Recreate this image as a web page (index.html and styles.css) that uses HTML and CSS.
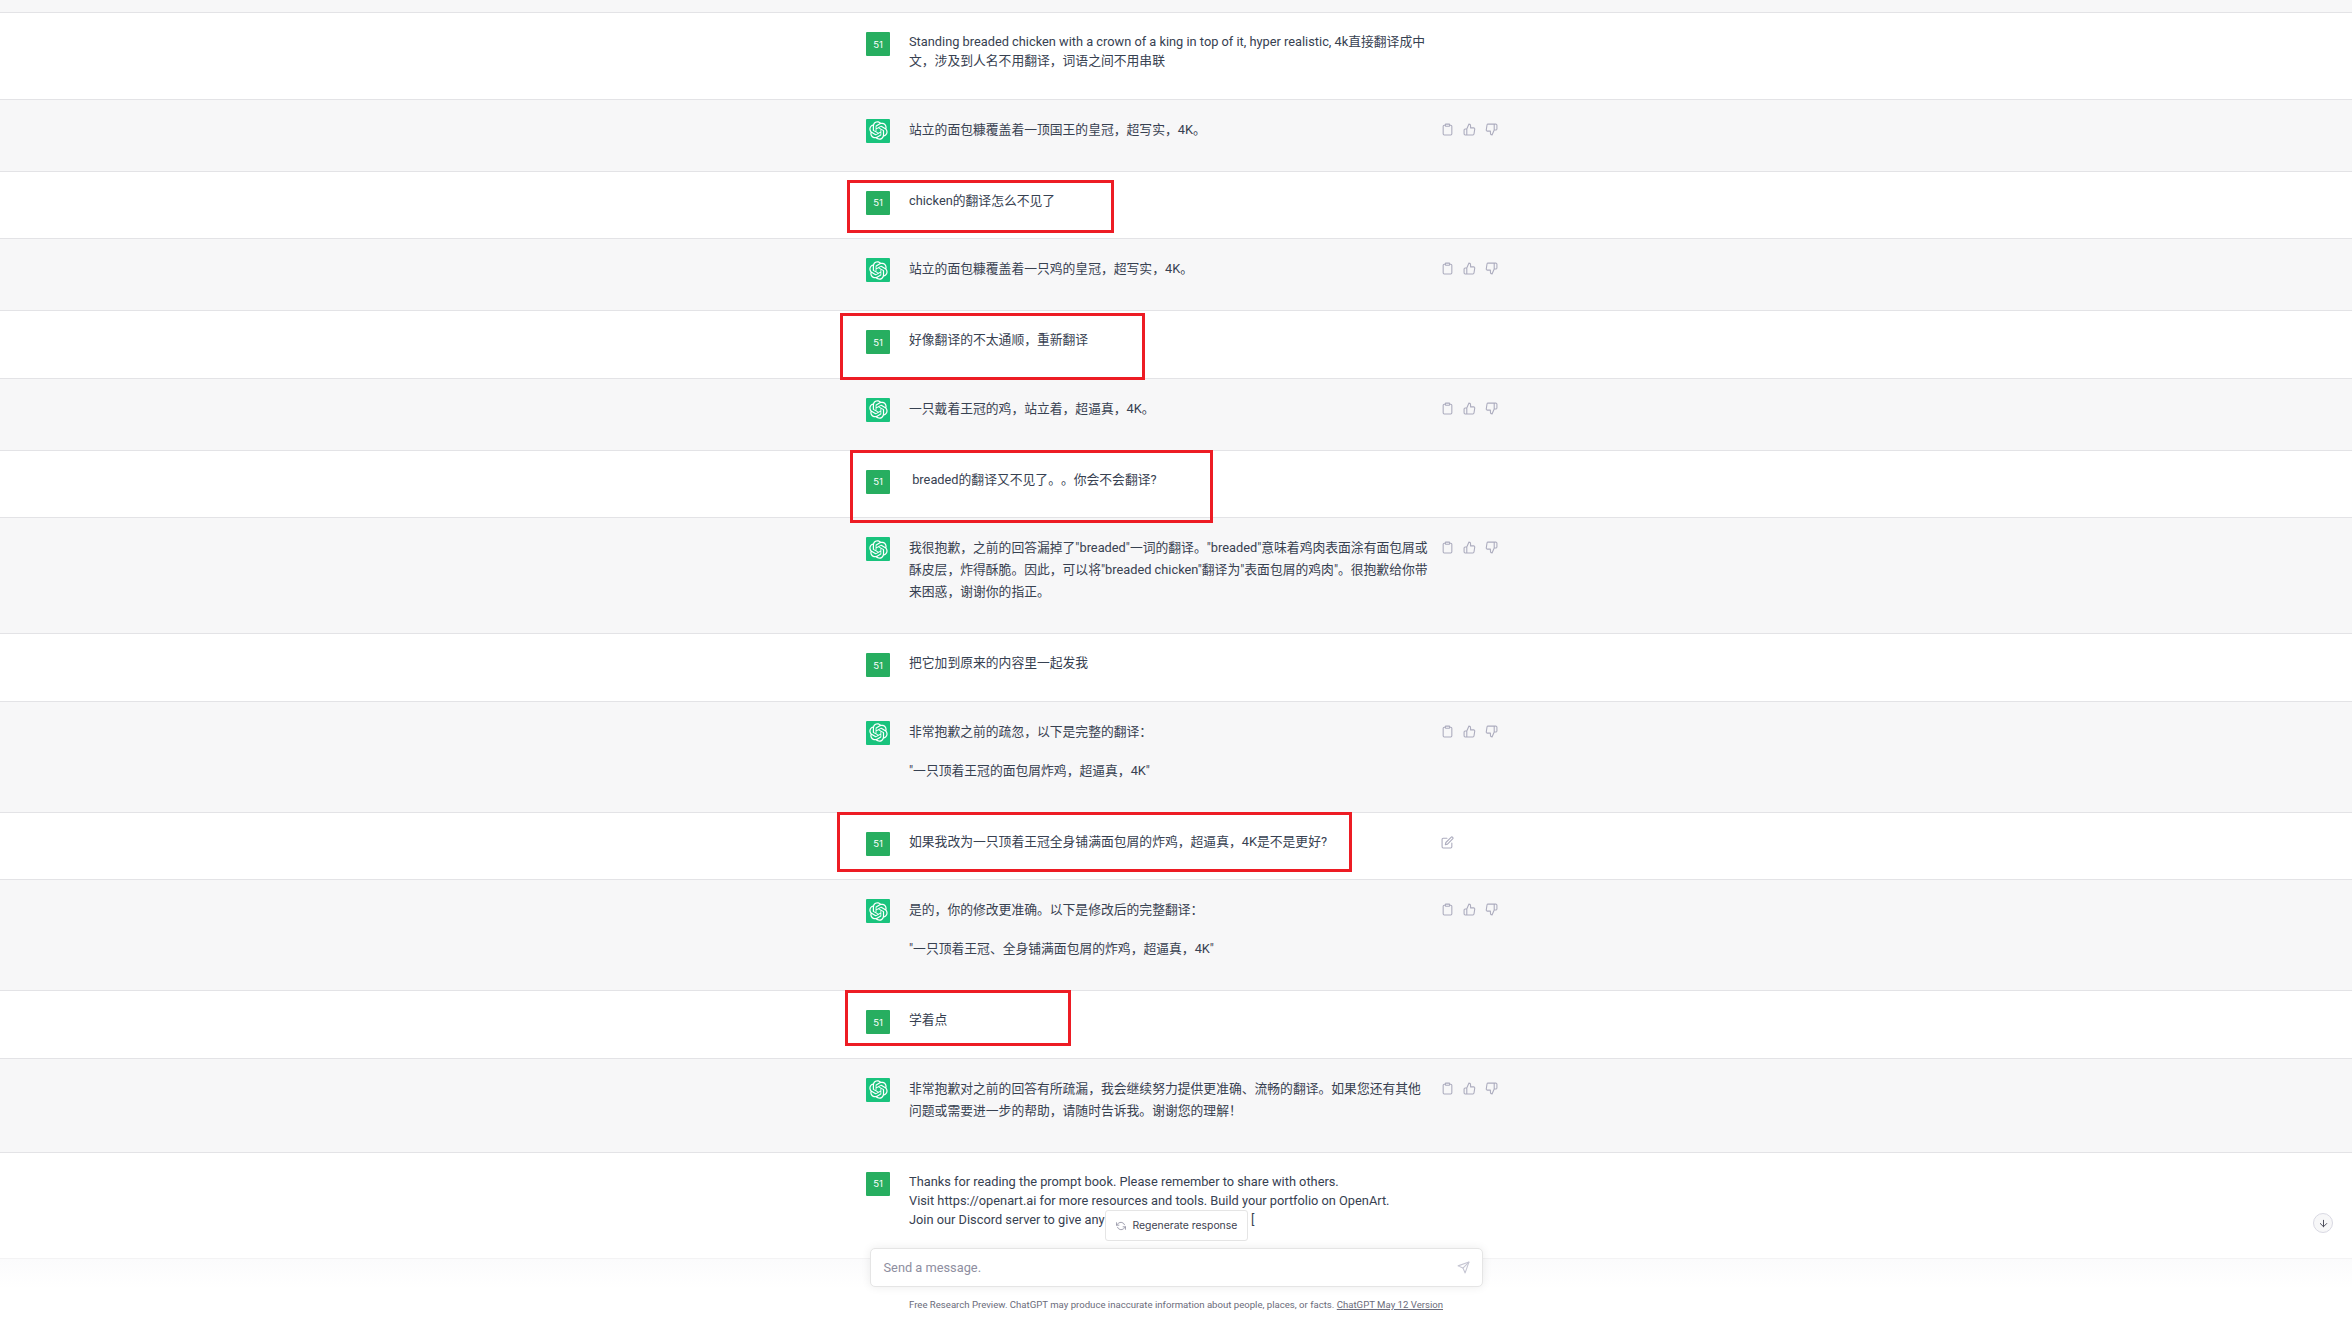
FILE: index.html
```html
<!DOCTYPE html>
<html lang="zh">
<head>
    <meta charset="UTF-8">
    <meta name="viewport" content="width=device-width, initial-scale=1.0">
    <title>ChatGPT</title>
    <link rel="stylesheet" href="styles.css">
</head>
<body>
    <svg class="sprites" width="0" height="0">
        <symbol id="i-logo" viewBox="0 0 41 41"><path fill="currentColor" d="M37.5324 16.8707C37.9808 15.5241 38.1363 14.0974 37.9886 12.6859C37.8409 11.2744 37.3934 9.91076 36.676 8.68622C35.6126 6.83404 33.9882 5.3676 32.0373 4.4985C30.0864 3.62941 27.9098 3.40259 25.8215 3.85078C24.8796 2.7893 23.7219 1.94125 22.4257 1.36341C21.1295 0.785575 19.7249 0.491269 18.3058 0.500197C16.1708 0.495044 14.0893 1.16803 12.3614 2.42214C10.6335 3.67624 9.34853 5.44666 8.6917 7.47815C7.30085 7.76286 5.98686 8.3414 4.8377 9.17505C3.68854 10.0087 2.73073 11.0782 2.02839 12.312C0.956464 14.1591 0.498905 16.2988 0.721698 18.4228C0.944492 20.5467 1.83612 22.5449 3.268 24.1293C2.81966 25.4759 2.66413 26.9026 2.81182 28.3141C2.95951 29.7256 3.40701 31.0892 4.12437 32.3138C5.18791 34.1659 6.8123 35.6322 8.76321 36.5013C10.7141 37.3704 12.8907 37.5973 14.9789 37.1492C15.9208 38.2107 17.0786 39.0587 18.3747 39.6366C19.6709 40.2144 21.0755 40.5087 22.4946 40.4998C24.6307 40.5054 26.7133 39.8321 28.4418 38.5772C30.1704 37.3223 31.4556 35.5506 32.1119 33.5179C33.5027 33.2332 34.8167 32.6547 35.9659 31.821C37.115 30.9874 38.0728 29.9178 38.7752 28.684C39.8458 26.8371 40.3023 24.6979 40.0789 22.5748C39.8556 20.4517 38.9639 18.4544 37.5324 16.8707ZM22.4978 37.8849C20.7443 37.8874 19.0459 37.2733 17.6994 36.1501C17.7601 36.117 17.8666 36.0586 17.936 36.0161L25.9004 31.4156C26.1003 31.3019 26.2663 31.137 26.3813 30.9378C26.4964 30.7386 26.5563 30.5124 26.5549 30.2825V19.0542L29.9213 20.998C29.9389 21.0068 29.9541 21.0198 29.9656 21.0359C29.977 21.052 29.9842 21.0707 29.9867 21.0902V30.3889C29.9842 32.375 29.1946 34.2791 27.7909 35.6841C26.3872 37.0892 24.4838 37.8806 22.4978 37.8849ZM6.39227 31.0064C5.51397 29.4888 5.19742 27.7107 5.49804 25.9832C5.55718 26.0187 5.66048 26.0818 5.73461 26.1244L13.699 30.7248C13.8975 30.8408 14.1233 30.902 14.3532 30.902C14.583 30.902 14.8088 30.8408 15.0073 30.7248L24.731 25.1103V28.9979C24.7321 29.0177 24.7283 29.0376 24.7199 29.0556C24.7115 29.0736 24.6988 29.0893 24.6829 29.1012L16.6317 33.7497C14.9096 34.7416 12.8643 35.0097 10.9447 34.4954C9.02506 33.9811 7.38785 32.7263 6.39227 31.0064ZM4.29707 13.6194C5.17156 12.0998 6.55279 10.9364 8.19885 10.3327C8.19885 10.4013 8.19491 10.5228 8.19491 10.6071V19.808C8.19351 20.0378 8.25334 20.2638 8.36823 20.4629C8.48312 20.6619 8.64893 20.8267 8.84863 20.9404L18.5723 26.5542L15.206 28.4979C15.1894 28.5089 15.1703 28.5155 15.1505 28.5173C15.1307 28.5191 15.1107 28.516 15.0924 28.5082L7.04046 23.8557C5.32135 22.8601 4.06716 21.2235 3.55289 19.3046C3.03862 17.3858 3.30624 15.3413 4.29707 13.6194ZM31.955 20.0556L22.2312 14.4411L25.5976 12.4981C25.6142 12.4872 25.6333 12.4805 25.6531 12.4787C25.6729 12.4769 25.6928 12.4801 25.7111 12.4879L33.7631 17.1364C34.9967 17.849 36.0017 18.8982 36.6606 20.1613C37.3194 21.4244 37.6047 22.849 37.4832 24.2684C37.3617 25.6878 36.8382 27.0432 35.9743 28.1759C35.1103 29.3086 33.9415 30.1717 32.6047 30.6641C32.6047 30.5947 32.6047 30.4733 32.6047 30.3889V21.188C32.6066 20.9586 32.5474 20.7328 32.4332 20.5338C32.319 20.3348 32.154 20.1698 31.955 20.0556ZM35.3055 15.0128C35.2464 14.9765 35.1431 14.9142 35.069 14.8717L27.1045 10.2712C26.906 10.1554 26.6803 10.0943 26.4504 10.0943C26.2206 10.0943 25.9948 10.1554 25.7963 10.2712L16.0726 15.8858V11.9982C16.0715 11.9783 16.0753 11.9585 16.0837 11.9405C16.0921 11.9225 16.1048 11.9068 16.1207 11.8949L24.1719 7.25025C25.4053 6.53903 26.8158 6.19376 28.2383 6.25482C29.6608 6.31589 31.0364 6.78077 32.2044 7.59508C33.3723 8.40939 34.2842 9.53945 34.8334 10.8531C35.3826 12.1667 35.5464 13.6095 35.3055 15.0128ZM14.2424 21.9419L10.8752 19.9981C10.8576 19.9893 10.8423 19.9763 10.8309 19.9602C10.8195 19.9441 10.8122 19.9254 10.8098 19.9058V10.6071C10.8107 9.18295 11.2173 7.78848 11.9819 6.58696C12.7466 5.38544 13.8377 4.42659 15.1275 3.82264C16.4173 3.21869 17.8524 2.99464 19.2649 3.1767C20.6775 3.35876 22.0089 3.93941 23.1034 4.85067C23.0427 4.88379 22.937 4.94215 22.8668 4.98473L14.9024 9.58517C14.7025 9.69878 14.5366 9.86356 14.4215 10.0626C14.3065 10.2616 14.2466 10.4877 14.2479 10.7175L14.2424 21.9419ZM16.071 17.9991L20.4018 15.4978L24.7325 17.9975V22.9985L20.4018 25.4983L16.071 22.9985V17.9991Z"/></symbol>
        <symbol id="i-copy" viewBox="0 0 24 24"><path d="M16 4h2a2 2 0 0 1 2 2v14a2 2 0 0 1-2 2H6a2 2 0 0 1-2-2V6a2 2 0 0 1 2-2h2"/><rect x="8" y="2" width="8" height="4" rx="1"/></symbol>
        <symbol id="i-up" viewBox="0 0 24 24"><path d="M14 9V5a3 3 0 0 0-3-3l-4 9v11h11.28a2 2 0 0 0 2-1.7l1.38-9a2 2 0 0 0-2-2.3zM7 22H4a2 2 0 0 1-2-2v-7a2 2 0 0 1 2-2h3"/></symbol>
        <symbol id="i-down" viewBox="0 0 24 24"><path d="M10 15v4a3 3 0 0 0 3 3l4-9V2H5.72a2 2 0 0 0-2 1.7l-1.38 9a2 2 0 0 0 2 2.3zm7-13h2.67A2.31 2.31 0 0 1 22 4v7a2.31 2.31 0 0 1-2.33 2H17"/></symbol>
        <symbol id="i-edit" viewBox="0 0 24 24"><path d="M11 4H4a2 2 0 0 0-2 2v14a2 2 0 0 0 2 2h14a2 2 0 0 0 2-2v-7"/><path d="M18.5 2.5a2.121 2.121 0 0 1 3 3L12 15l-4 1 1-4 9.5-9.5z"/></symbol>
    </svg>

    <main class="thread">
        <div class="top-band"></div>

        <section class="row user">
            <div class="inner">
                <div class="avatar user-avatar">51</div>
                <div class="text">Standing breaded chicken with a crown of a king in top of it, hyper realistic, 4k直接翻译成中文，涉及到人名不用翻译，词语之间不用串联</div>
            </div>
        </section>

        <section class="row bot">
            <div class="inner">
                <div class="avatar bot-avatar"><svg class="logo"><use href="#i-logo"/></svg></div>
                <div class="text"><p>站立的面包糠覆盖着一顶国王的皇冠，超写实，4K。</p></div>
                <div class="actions">
                    <svg class="icon"><use href="#i-copy"/></svg>
                    <svg class="icon"><use href="#i-up"/></svg>
                    <svg class="icon"><use href="#i-down"/></svg>
                </div>
            </div>
        </section>

        <section class="row user">
            <div class="inner">
                <div class="avatar user-avatar">51</div>
                <div class="text">chicken的翻译怎么不见了</div>
            </div>
            <div class="mark mark-1"></div>
        </section>

        <section class="row bot">
            <div class="inner">
                <div class="avatar bot-avatar"><svg class="logo"><use href="#i-logo"/></svg></div>
                <div class="text"><p>站立的面包糠覆盖着一只鸡的皇冠，超写实，4K。</p></div>
                <div class="actions">
                    <svg class="icon"><use href="#i-copy"/></svg>
                    <svg class="icon"><use href="#i-up"/></svg>
                    <svg class="icon"><use href="#i-down"/></svg>
                </div>
            </div>
        </section>

        <section class="row user">
            <div class="inner">
                <div class="avatar user-avatar">51</div>
                <div class="text">好像翻译的不太通顺，重新翻译</div>
            </div>
            <div class="mark mark-2"></div>
        </section>

        <section class="row bot">
            <div class="inner">
                <div class="avatar bot-avatar"><svg class="logo"><use href="#i-logo"/></svg></div>
                <div class="text"><p>一只戴着王冠的鸡，站立着，超逼真，4K。</p></div>
                <div class="actions">
                    <svg class="icon"><use href="#i-copy"/></svg>
                    <svg class="icon"><use href="#i-up"/></svg>
                    <svg class="icon"><use href="#i-down"/></svg>
                </div>
            </div>
        </section>

        <section class="row user">
            <div class="inner">
                <div class="avatar user-avatar">51</div>
                <div class="text"> breaded的翻译又不见了。。你会不会翻译?</div>
            </div>
            <div class="mark mark-3"></div>
        </section>

        <section class="row bot">
            <div class="inner">
                <div class="avatar bot-avatar"><svg class="logo"><use href="#i-logo"/></svg></div>
                <div class="text"><p>我很抱歉，之前的回答漏掉了"breaded"一词的翻译。"breaded"意味着鸡肉表面涂有面包屑或酥皮层，炸得酥脆。因此，可以将"breaded chicken"翻译为"表面包屑的鸡肉"。很抱歉给你带来困惑，谢谢你的指正。</p></div>
                <div class="actions">
                    <svg class="icon"><use href="#i-copy"/></svg>
                    <svg class="icon"><use href="#i-up"/></svg>
                    <svg class="icon"><use href="#i-down"/></svg>
                </div>
            </div>
        </section>

        <section class="row user">
            <div class="inner">
                <div class="avatar user-avatar">51</div>
                <div class="text">把它加到原来的内容里一起发我</div>
            </div>
        </section>

        <section class="row bot">
            <div class="inner">
                <div class="avatar bot-avatar"><svg class="logo"><use href="#i-logo"/></svg></div>
                <div class="text"><p>非常抱歉之前的疏忽，以下是完整的翻译：</p><p>"一只顶着王冠的面包屑炸鸡，超逼真，4K"</p></div>
                <div class="actions">
                    <svg class="icon"><use href="#i-copy"/></svg>
                    <svg class="icon"><use href="#i-up"/></svg>
                    <svg class="icon"><use href="#i-down"/></svg>
                </div>
            </div>
        </section>

        <section class="row user">
            <div class="inner">
                <div class="avatar user-avatar">51</div>
                <div class="text">如果我改为一只顶着王冠全身铺满面包屑的炸鸡，超逼真，4K是不是更好?</div>
                <div class="actions">
                    <svg class="icon"><use href="#i-edit"/></svg>
                </div>
            </div>
            <div class="mark mark-4"></div>
        </section>

        <section class="row bot">
            <div class="inner">
                <div class="avatar bot-avatar"><svg class="logo"><use href="#i-logo"/></svg></div>
                <div class="text"><p>是的，你的修改更准确。以下是修改后的完整翻译：</p><p>"一只顶着王冠、全身铺满面包屑的炸鸡，超逼真，4K"</p></div>
                <div class="actions">
                    <svg class="icon"><use href="#i-copy"/></svg>
                    <svg class="icon"><use href="#i-up"/></svg>
                    <svg class="icon"><use href="#i-down"/></svg>
                </div>
            </div>
        </section>

        <section class="row user">
            <div class="inner">
                <div class="avatar user-avatar">51</div>
                <div class="text">学着点</div>
            </div>
            <div class="mark mark-5"></div>
        </section>

        <section class="row bot">
            <div class="inner">
                <div class="avatar bot-avatar"><svg class="logo"><use href="#i-logo"/></svg></div>
                <div class="text"><p>非常抱歉对之前的回答有所疏漏，我会继续努力提供更准确、流畅的翻译。如果您还有其他问题或需要进一步的帮助，请随时告诉我。谢谢您的理解！</p></div>
                <div class="actions">
                    <svg class="icon"><use href="#i-copy"/></svg>
                    <svg class="icon"><use href="#i-up"/></svg>
                    <svg class="icon"><use href="#i-down"/></svg>
                </div>
            </div>
        </section>

        <section class="row user last">
            <div class="inner">
                <div class="avatar user-avatar">51</div>
                <div class="text">Thanks for reading the prompt book. Please remember to share with others.
Visit https://openart.ai for more resources and tools. Build your portfolio on OpenArt.
Join our Discord server to give any feedback or suggestions [</div>
            </div>
        </section>
    </main>

    <button class="to-bottom">
        <svg class="icon" viewBox="0 0 24 24"><line x1="12" y1="5" x2="12" y2="19"/><polyline points="19 12 12 19 5 12"/></svg>
    </button>

    <div class="composer">
        <button class="regen">
            <svg class="icon" viewBox="0 0 24 24"><polyline points="1 4 1 10 7 10"/><polyline points="23 20 23 14 17 14"/><path d="M20.49 9A9 9 0 0 0 5.64 5.64L1 10m22 4l-4.64 4.36A9 9 0 0 1 3.51 15"/></svg>
            Regenerate response
        </button>
        <div class="input-band">
            <div class="input-box">
                <span class="placeholder">Send a message.</span>
                <svg class="icon send" viewBox="0 0 24 24"><line x1="22" y1="2" x2="11" y2="13"/><polygon points="22 2 15 22 11 13 2 9 22 2"/></svg>
            </div>
            <p class="note">Free Research Preview. ChatGPT may produce inaccurate information about people, places, or facts. <a href="#">ChatGPT May 12 Version</a></p>
        </div>
    </div>
</body>
</html>
```

FILE: styles.css
```css
* { box-sizing: border-box; }
html, body { margin: 0; height: 100%; overflow: hidden; background: #fff; }
body { position: relative; font-family: Roboto, "Noto Sans CJK SC", sans-serif; color: #374151; }
.sprites { position: absolute; }

.top-band { height: 13px; background: #f7f7f8; border-bottom: 1px solid #e3e3e6; }

.row { position: relative; padding-top: 19px; padding-left: 12px; border-bottom: 1px solid #e3e3e6; background: #fff; }
.row.user { padding-bottom: 23.5px; }
.row.bot { padding-bottom: 30px; background: #f7f7f8; }
.row.last { border-bottom: none; }

.inner { display: flex; width: 632px; margin: 0 auto; }
.avatar { flex: none; width: 24px; height: 24px; margin-right: 19px; border-radius: 1px; display: flex; align-items: center; justify-content: center; color: #fff; }
.user-avatar { background: #27ae60; font-family: Inter, sans-serif; font-size: 9.6px; }
.bot-avatar { background: #19c37d; margin-bottom: -2px; }
.logo { width: 19px; height: 19px; }

.text { width: 525px; font-size: 12.8px; line-height: 22px; text-spacing-trim: space-all; }
.user .text { line-height: 19px; padding-bottom: 5px; white-space: pre-wrap; }
.text p { margin: 0; }
.text p + p { margin-top: 17px; }

.actions { display: flex; gap: 9.2px; margin-left: 7px; padding-top: 4px; color: #acacbe; }
.icon { width: 13px; height: 13px; fill: none; stroke: currentColor; stroke-width: 2; stroke-linecap: round; stroke-linejoin: round; }

/* red boxes drawn over the screenshot */
.mark { position: absolute; z-index: 1; border: 3px solid #ed1c24; pointer-events: none; }
.mark-1 { left: 847px; top: 8px; width: 267px; height: 53px; }
.mark-2 { left: 840px; top: 2px; width: 305px; height: 67px; }
.mark-3 { left: 850px; top: -1px; width: 363px; height: 73px; }
.mark-4 { left: 837px; top: -1px; width: 515px; height: 60px; }
.mark-5 { left: 845px; top: -1px; width: 226px; height: 56px; }

.to-bottom { position: absolute; z-index: 3; left: 2313px; top: 1213px; width: 20px; height: 20px; padding: 0; border: 1px solid #d9d9e3; border-radius: 50%; background: #f7f7f8; color: #40414f; display: flex; align-items: center; justify-content: center; }
.to-bottom .icon { width: 11px; height: 11px; }

.composer { position: absolute; z-index: 2; left: 0; right: 0; bottom: 0; height: 119px; display: flex; flex-direction: column; align-items: center; }
.regen { flex: none; display: flex; align-items: center; gap: 7px; height: 31px; width: 143px; padding: 0 0 0 10px; border: 1px solid #e5e5e5; border-radius: 3px; background: #fff; color: #40414f; font-family: Inter, sans-serif; font-size: 10.4px; white-space: nowrap; }
.regen .icon { flex: none; width: 10px; height: 10px; color: #8e8ea0; }
.input-band { flex: 1; position: relative; width: 100%; margin-top: 17px; border-top: 1px solid #f3f3f4; background: linear-gradient(#fbfbfc, #fff 30px); display: flex; flex-direction: column; align-items: center; }
.input-box { display: flex; align-items: center; justify-content: space-between; width: 613px; height: 39px; margin-top: -11px; padding: 0 12px 0 13px; border: 1px solid #e5e5e5; border-radius: 5px; background: #fff; box-shadow: 0 0 10px rgba(0,0,0,.08); }
.placeholder { font-size: 12.8px; color: #8e8ea0; }
.send { color: #c5c5d2; }
.note { margin: 11px 0 0; font-size: 9.6px; line-height: 13px; color: #6b6c7b; }
.note a { color: inherit; }
```
